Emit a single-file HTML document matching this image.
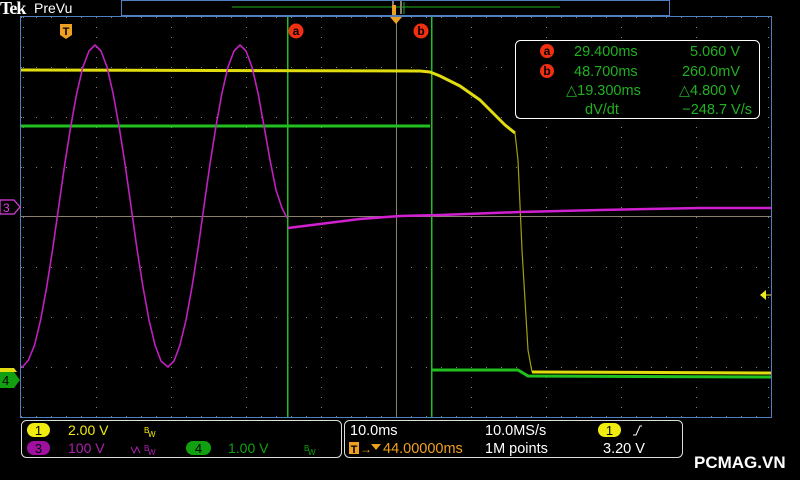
<!DOCTYPE html>
<html><head><meta charset="utf-8"><style>
html,body{margin:0;padding:0;background:#000;width:800px;height:480px;overflow:hidden;font-family:"Liberation Sans",sans-serif}
</style></head><body>
<svg width="800" height="480" viewBox="0 0 800 480" xmlns="http://www.w3.org/2000/svg" style="position:absolute;left:0;top:0">
<defs>
<pattern id="hd" x="21" y="0" width="15" height="480" patternUnits="userSpaceOnUse"><rect x="0" y="0" width="1" height="480" fill="#8a8070"/></pattern>
<pattern id="vd" x="0" y="17" width="800" height="10" patternUnits="userSpaceOnUse"><rect x="0" y="0" width="800" height="1" fill="#8a8070"/></pattern>
</defs>
<rect width="800" height="480" fill="#000"/>
<text x="0" y="14" fill="#fff" font-size="18" font-weight="bold" font-family="Liberation Serif,serif" letter-spacing="-1">Tek</text>
<text x="34" y="13" fill="#fff" font-size="14">PreVu</text>
<rect x="121.5" y="0.5" width="548" height="15" fill="none" stroke="#5080c0" stroke-width="1"/>
<line x1="232" y1="7" x2="560" y2="7" stroke="#20b020" stroke-width="1"/>
<rect x="392" y="1" width="2" height="13" fill="#8a8070"/><rect x="400" y="1" width="2" height="13" fill="#8a8070"/>
<rect x="392" y="5" width="4" height="10" fill="#f0a020"/>
<line x1="404" y1="2" x2="404" y2="14" stroke="#20b020"/>
<g>
<rect x="21" y="17" width="750" height="1" fill="url(#hd)"/>
<rect x="21" y="67" width="750" height="1" fill="url(#hd)"/>
<rect x="21" y="117" width="750" height="1" fill="url(#hd)"/>
<rect x="21" y="167" width="750" height="1" fill="url(#hd)"/>
<rect x="21" y="267" width="750" height="1" fill="url(#hd)"/>
<rect x="21" y="317" width="750" height="1" fill="url(#hd)"/>
<rect x="21" y="367" width="750" height="1" fill="url(#hd)"/>
<rect x="21" y="416" width="750" height="1" fill="url(#hd)"/>
<rect x="23" y="17" width="1" height="400" fill="url(#vd)"/>
<rect x="96" y="17" width="1" height="400" fill="url(#vd)"/>
<rect x="171" y="17" width="1" height="400" fill="url(#vd)"/>
<rect x="246" y="17" width="1" height="400" fill="url(#vd)"/>
<rect x="321" y="17" width="1" height="400" fill="url(#vd)"/>
<rect x="471" y="17" width="1" height="400" fill="url(#vd)"/>
<rect x="546" y="17" width="1" height="400" fill="url(#vd)"/>
<rect x="621" y="17" width="1" height="400" fill="url(#vd)"/>
<rect x="696" y="17" width="1" height="400" fill="url(#vd)"/>
<rect x="768" y="17" width="1" height="400" fill="url(#vd)"/>
</g>
<line x1="21" y1="216.5" x2="771" y2="216.5" stroke="#8a8070" stroke-width="1"/>
<line x1="396.5" y1="17" x2="396.5" y2="417" stroke="#8a8070" stroke-width="1"/>
<rect x="20.5" y="16.5" width="751" height="401" fill="none" stroke="#5080c0" stroke-width="1"/>
<rect x="287" y="17" width="1.5" height="400" fill="#20c020"/>
<rect x="431" y="17" width="1.5" height="400" fill="#20c020"/>
<path d="M390 17 L402 17 L396 24 Z" fill="#f0a020"/>
<polyline points="21,126 430,126" stroke="#20c020" stroke-width="3" fill="none"/>
<polyline points="432,370 518,370 528,376 771,377" stroke="#20c020" stroke-width="3" fill="none"/>
<polyline points="21,70 420,71 430,72 440,76 460,86 480,100 495,115 505,125 515,133" stroke="#e0dc10" stroke-width="3" fill="none" stroke-linejoin="round"/>
<polyline points="515,133 518,160 522,250 528,350 532,372" stroke="#a0a010" stroke-width="1.2" fill="none"/>
<polyline points="532,372 771,373" stroke="#e0dc10" stroke-width="3" fill="none"/>
<polyline points="21,366 22.5,367 28.5,360 34.6,345 40.6,320 46.7,287 52.7,249 58.8,206 64.8,164 70.8,126 76.8,93 82.9,67 89,51 95,45 101,51 107,67 113,93 119,126 125,164 131,206 137,249 143,287 149,320 155,345 161,361 168,367 174,361 180,345 186,320 192,287 198,249 204,206 210,164 216,126 222,93 228,67 234,51 240,45 246,51 252,67 258,93 264,126 270,160 276,190 282,208 287,218" stroke="#c020c0" stroke-width="1.6" fill="none" stroke-linejoin="round"/>
<polyline points="288,228 320,224 360,219 400,216 440,215 520,212 600,210 700,208 771,208" stroke="#d020d0" stroke-width="2.5" fill="none"/>
<path d="M60 24 h12 v11 l-6 4 l-6 -4 Z" fill="#f0a020"/>
<text x="66" y="35" fill="#000" font-size="11" font-weight="bold" text-anchor="middle">T</text>
<circle cx="296" cy="31" r="7.5" fill="#f03010"/><text x="296" y="35" fill="#000" font-size="12" font-weight="bold" text-anchor="middle">a</text>
<circle cx="421" cy="31" r="7.5" fill="#f03010"/><text x="421" y="35" fill="#000" font-size="12" font-weight="bold" text-anchor="middle">b</text>
<rect x="515.5" y="40.5" width="244" height="78" rx="5" fill="#000" stroke="#fff" stroke-width="1"/>
<circle cx="547" cy="51" r="7" fill="#f03010"/><text x="547" y="55" fill="#000" font-size="12" font-weight="bold" text-anchor="middle">a</text>
<circle cx="547" cy="71" r="7" fill="#f03010"/><text x="547" y="75" fill="#000" font-size="12" font-weight="bold" text-anchor="middle">b</text>
<g fill="#20b020" font-size="14.5">
<text x="574" y="56">29.400ms</text>
<text x="740" y="56" text-anchor="end">5.060 V</text>
<text x="574" y="76">48.700ms</text>
<text x="740" y="76" text-anchor="end">260.0mV</text>
<text x="566" y="95">△19.300ms</text>
<text x="740" y="95" text-anchor="end">△4.800 V</text>
<text x="585" y="114">dV/dt</text>
<text x="752" y="114" text-anchor="end">−248.7 V/s</text>
</g>
<path d="M0 200 h14 l6 7 l-6 7 h-14 Z" fill="#000" stroke="#e040e0" stroke-width="1.2"/>
<text x="3" y="212" fill="#e040e0" font-size="12">3</text>
<path d="M0 368 h14 l3 4 h-17 Z" fill="#e0dc10"/>
<path d="M0 372 h14 l6 8 l-6 8 h-14 Z" fill="#10a010"/>
<text x="2" y="385" fill="#000" font-size="13">4</text>
<path d="M760 295 l6 -5 v10 Z" fill="#f0ec20"/><line x1="764" y1="295" x2="771" y2="295" stroke="#f0ec20"/>
<rect x="21.5" y="420.5" width="320" height="37" rx="5" fill="none" stroke="#ddd" stroke-width="1"/>
<rect x="27" y="423" width="23" height="14" rx="7" fill="#f0ec10"/><text x="38.5" y="435" fill="#000" font-size="13" text-anchor="middle">1</text>
<text x="68" y="435" fill="#f0ec10" font-size="14">2.00 V</text>
<text x="144" y="433" fill="#f0ec10" font-size="8">B</text><text x="148" y="437" fill="#f0ec10" font-size="8">W</text>
<rect x="27" y="441" width="23" height="14" rx="7" fill="#a010a0"/><text x="38.5" y="453" fill="#000" font-size="13" text-anchor="middle">3</text>
<text x="68" y="453" fill="#b020b0" font-size="14">100 V</text>
<path d="M131 447 l3 6 l3 -6 l3 6" stroke="#b020b0" fill="none" stroke-width="1"/>
<text x="144" y="451" fill="#b020b0" font-size="8">B</text><text x="148" y="455" fill="#b020b0" font-size="8">W</text>
<rect x="186" y="441" width="25" height="14" rx="7" fill="#10a010"/><text x="198.5" y="453" fill="#000" font-size="13" text-anchor="middle">4</text>
<text x="228" y="453" fill="#10a010" font-size="14">1.00 V</text>
<text x="304" y="451" fill="#10a010" font-size="8">B</text><text x="308" y="455" fill="#10a010" font-size="8">W</text>
<rect x="344.5" y="420.5" width="338" height="37" rx="5" fill="none" stroke="#ddd" stroke-width="1"/>
<text x="350" y="435" fill="#fff" font-size="14.5">10.0ms</text>
<text x="485" y="435" fill="#fff" font-size="14.5">10.0MS/s</text>
<rect x="598" y="423" width="23" height="14" rx="7" fill="#f0ec10"/><text x="609.5" y="435" fill="#000" font-size="13" text-anchor="middle">1</text>
<path d="M633 435 h3 l4 -9 h2" stroke="#fff" fill="none" stroke-width="1"/>
<rect x="349" y="442" width="10" height="12" fill="#f0a020"/><text x="354" y="453" fill="#000" font-size="11" font-weight="bold" text-anchor="middle">T</text>
<text x="360" y="453" fill="#f0a020" font-size="12">→</text>
<path d="M371 444 h10 l-5 6 Z" fill="#f0a020"/>
<text x="383" y="453" fill="#f0a020" font-size="14.5">44.00000ms</text>
<text x="485" y="453" fill="#fff" font-size="14.5">1M points</text>
<text x="603" y="453" fill="#fff" font-size="14.5">3.20 V</text>
<text x="694" y="468" fill="#fff" font-size="17" font-weight="bold">PCMAG.VN</text>
</svg>
</body></html>
